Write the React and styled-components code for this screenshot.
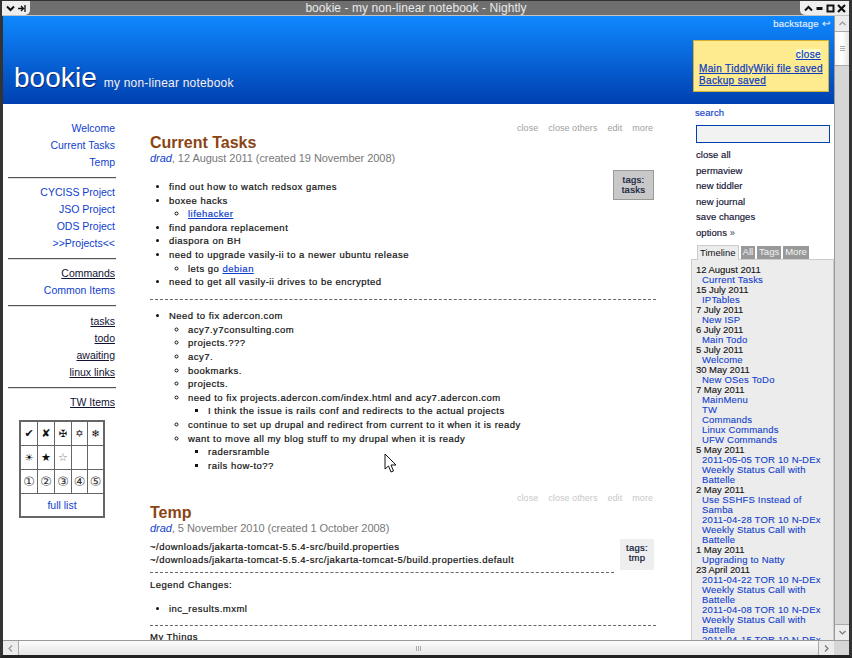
import React from 'react';
import styled, { createGlobalStyle } from 'styled-components';

const Global = createGlobalStyle`
  html, body { margin: 0; padding: 0; width: 852px; height: 658px; overflow: hidden; background: #000; }
  * { box-sizing: border-box; }
  body { font-family: "Liberation Sans", Arial, sans-serif; }
`;

const Frame = styled.div`
  position: relative;
  width: 852px; height: 658px;
  display: flex; flex-direction: column;
  background: #d8d8d8;
  border-left: 3px solid #333;
  border-right: 3px solid #333;
  border-bottom: 3px solid #222;
  border-top: 1px solid #333;
`;
const TitleBar = styled.div`
  height: 15px; flex: none;
  display: flex; align-items: stretch;
  background: #6f6f6f;
  border-bottom: 1px solid #c4c4c4;
  margin-left: -1px;
`;
const TitleTab = styled.div`
  flex: none;
  width: ${p => p.$w}px;
  background: #eeeeee;
  display: flex; align-items: center; justify-content: center; gap: 2px;
  border-radius: ${p => (p.$side === 'left' ? '0 0 5px 0' : '0 0 0 5px')};
`;
const TitleText = styled.div`
  flex: 1; text-align: center;
  color: #eaeaea; font-size: 12px; line-height: 14px; letter-spacing: 0.06px;
  padding-left: 2px;
`;
const Middle = styled.div`
  flex: 1; min-height: 0; display: flex;
`;
const Viewport = styled.div`
  width: 831px; flex: none; overflow: hidden; background: #fff;
`;
const Header = styled.header`
  height: 88px;
  background: linear-gradient(#0f88ff, #0040b0);
  position: relative;
  display: flex; flex-direction: column;
`;
const Backstage = styled.div`
  text-align: right; color: #e6f0ff; font-size: 9.5px; line-height: 12px;
  letter-spacing: 0.25px; padding: 2px 4px 0 0;
  height: 24px; -webkit-text-stroke: 0.15px #e6f0ff;
`;
const SiteTitle = styled.div`
  margin-top: auto; padding: 0 0 11px 11px;
  color: #fff; display: flex; align-items: baseline; gap: 7px;
`;
const SiteName = styled.span`
  font-size: 28px; line-height: 30px; letter-spacing: 0.05px;
  text-shadow: 1px 1px 0 #0a2a70;
`;
const SiteSub = styled.span`
  font-size: 12px; letter-spacing: 0.2px; color: #eef3ff;
  text-shadow: 1px 1px 0 #1a4aa0;
`;
const Message = styled.div`
  position: absolute; right: 5px; top: 24px;
  width: 136px; height: 52px;
  background: #ffeb8f; border: 1px solid #d8b030;
  padding: 8px 5px 0;
  font-size: 10px; line-height: 12.5px; letter-spacing: 0.36px;
  color: #0f3fc0;
`;
const MsgClose = styled.div`
  text-align: right; margin: 0 2px 1px 0;
`;
const MsgCloseText = styled.span`
  background: #fffbc4; text-decoration: underline; -webkit-text-stroke: 0.25px #0f3fc0;
`;
const MsgLine = styled.a`
  display: block; text-decoration: underline; white-space: nowrap;
  -webkit-text-stroke: 0.25px #0f3fc0;
`;
const Page = styled.div`
  display: flex; align-items: flex-start; height: 536px; overflow: hidden;
`;
const LeftMenu = styled.nav`
  width: 108px; margin-left: 5px; flex: none;
  padding-top: 16px;
  display: flex; flex-direction: column; align-items: stretch;
  font-size: 10.5px;
  text-align: right;
`;
const MenuLink = styled.a`
  display: block; line-height: 17px; height: 17px; padding-right: 1px;
  color: ${p => (p.$dark ? '#111133' : '#0f40cc')};
  span { text-decoration: ${p => (p.$dark ? 'underline' : 'none')}; }
`;
const MenuRule = styled.hr`
  margin: 6px 0 ${p => p.$after || 5}px; border: 0; border-top: 1px solid #555; border-bottom: 1px solid #ddd; height: 2px;
  width: 108px; align-self: flex-end;
`;
const SymbolTable = styled.div`
  margin: 9px 0 0 11px; width: 86px; text-align: center;
  display: grid; grid-template-columns: 16px 16px 16px 15px 15px;
  border: 2px solid #666;
  background: #666; gap: 1px;
`;
const Sym = styled.div`
  background: #fff; height: 23px; display: flex; align-items: center; justify-content: center;
  font-family: "DejaVu Sans", sans-serif; font-size: ${p => p.$fs || 10}px; color: ${p => p.$c || '#111'};
`;
const FullList = styled.div`
  grid-column: 1 / -1; background: #fff; height: 22px; line-height: 22px;
  font-size: 10.5px; color: #0f40cc;
`;
const Center = styled.main`
  width: 506px; margin-left: 34px; flex: none;
  padding-top: 18px;
`;
const Story = styled.article`
  margin-bottom: 19.5px;
`;
const Toolbar = styled.div`
  text-align: right; font-size: 9px; line-height: 12px; padding-right: 3px; height: 12px;
  letter-spacing: 0.05px; font-weight: 400;
  color: ${p => (p.$faint ? '#c8c8c8' : '#a0a0a0')};
  span { margin-left: 7.5px; }
`;
const StoryTitle = styled.h2`
  margin: 0; font-size: 16px; line-height: 16px; color: #8a4513; font-weight: 700; padding-top: 1px;
`;
const SubTitle = styled.div`
  font-size: 11px; line-height: 14px; color: #777; letter-spacing: -0.05px;
  em { color: #0f40cc; }
`;
const Tags = styled.div`
  float: right; margin: ${p => (p.$plain ? -1 : 5)}px 2px 0 0;
  width: ${p => p.$w}px; height: ${p => p.$h}px; padding: 4px 4px;
  text-align: center; font-size: 9.5px; line-height: 10px; letter-spacing: 0.3px;
  color: #0b1a50;
  background: ${p => (p.$plain ? '#eeeeee' : '#c8c8c8')};
  border: ${p => (p.$plain ? '0' : '1px solid #999')};
`;
const Body = styled.div`
  font-size: 9.5px; line-height: 13.6px; color: #111; letter-spacing: 0.48px;
  -webkit-text-stroke: 0.2px #111;
  position: relative;
  padding-top: ${p => p.$top || 0}px;
`;
const Spacer = styled.div`
  height: ${p => p.$h}px;
`;
const List = styled.ul`
  margin: 0; padding: 0 0 0 ${p => (p.$type === 'square' ? 20 : 19)}px;
  list-style-type: ${p => p.$type || 'disc'};
`;
const Dash = styled.hr`
  margin: ${p => p.$mt ?? 10}px 0 ${p => p.$mb ?? 9.5}px; border: 0; border-top: 1px dashed #666; height: 0; overflow: hidden;
  width: ${p => p.$w || 506}px;
`;
const Line = styled.div`
  white-space: nowrap;
`;
const BlueLink = styled.a`
  color: #0f40cc; text-decoration: underline; -webkit-text-stroke: 0.2px #0f40cc;
`;
const RightCol = styled.aside`
  width: 143px; margin-left: 35px; flex: none;
  padding-top: 3px;
`;
const SearchLabel = styled.div`
  margin-left: 4px; font-size: 9.5px; line-height: 12px; color: #0f40cc; letter-spacing: 0.1px;
  -webkit-text-stroke: 0.15px #0f40cc;
`;
const SearchBox = styled.div`
  margin: 6px 0 4px 5px; width: 134px; height: 18px;
  background: #f2f2f2; border: 1px solid #0040b0;
`;
const SideBtn = styled.div`
  margin-left: 5px; font-size: 9.5px; line-height: 15.5px; color: #111133; letter-spacing: 0.05px;
  -webkit-text-stroke: 0.15px #111133;
  span { color: #777; }
`;
const TabRow = styled.div`
  display: flex; gap: 2px; align-items: flex-end; margin: 5px 0 0 6px; height: 14px;
`;
const Tab = styled.div`
  font-size: 9.5px; line-height: 12px; padding: 0 2px;
  background: ${p => (p.$on ? '#ececec' : '#999')};
  color: ${p => (p.$on ? '#111' : '#f4f4f4')};
  height: ${p => (p.$on ? 15 : 13)}px;
  margin-bottom: ${p => (p.$on ? -1 : 0)}px;
  border: ${p => (p.$on ? '1px solid #ccc' : '0')};
  border-bottom: 0;
  position: relative;
  padding-top: ${p => (p.$on ? 1 : 0)}px;
`;
const Timeline = styled.div`
  width: 143px; background: #ececec; border: 1px solid #ccc; border-bottom: 0;
  padding: 5px 0 0 4px; height: 400px;
  font-size: 9.5px; line-height: 10px;
`;
const TDate = styled.div`
  color: #111; letter-spacing: -0.05px; -webkit-text-stroke: 0.1px #111;
`;
const TItem = styled.div`
  color: #0f40cc; padding-left: 6px; width: 131px; letter-spacing: 0.2px; -webkit-text-stroke: 0.1px #0f40cc;
`;
const VScroll = styled.div`
  width: 15px; flex: none; display: flex; flex-direction: column;
  background: #d6d6d6; border-left: 1px solid #999;
`;
const ScrollBtn = styled.div`
  height: 16px; flex: none; display: flex; align-items: center; justify-content: center;
  background: #ececec; border: 1px solid #aaa; border-width: ${p => p.$edge || '0 0 1px 0'};
`;
const VThumb = styled.div`
  height: 34px; flex: none; background: linear-gradient(90deg, #f8f8f8, #fff 50%, #e4e4e4);
  border-bottom: 1px solid #aaa; display: flex; align-items: center; justify-content: center;
`;
const Grow = styled.div` flex: 1; `;
const HScroll = styled.div`
  height: 15px; flex: none; display: flex; background: #d6d6d6;
  border-top: 1px solid #999;
`;
const HBtn = styled.div`
  width: 16px; flex: none; display: flex; align-items: center; justify-content: center;
  background: #ececec; border-right: ${p => (p.$right ? 0 : '1px solid #aaa')}; border-left: ${p => (p.$right ? '1px solid #aaa' : 0)};
`;
const HThumb = styled.div`
  flex: 1; background: linear-gradient(#fcfcfc, #e6e6e6); display: flex; align-items: center; justify-content: center;
`;
const Corner = styled.div` width: 15px; flex: none; background: #d6d6d6; `;
const Cursor = styled.svg`
  position: absolute; left: 381px; top: 452px; width: 13px; height: 21px;
`;

const Icon = ({ d, stroke = '#111', sw = 1.6 }) => (
  <svg width="9" height="9" viewBox="0 0 9 9"><path d={d} fill="none" stroke={stroke} strokeWidth={sw} /></svg>
);

const tl = [
  ['12 August 2011', ['Current Tasks']],
  ['15 July 2011', ['IPTables']],
  ['7 July 2011', ['New ISP']],
  ['6 July 2011', ['Main Todo']],
  ['5 July 2011', ['Welcome']],
  ['30 May 2011', ['New OSes ToDo']],
  ['7 May 2011', ['MainMenu', 'TW', 'Commands', 'Linux Commands', 'UFW Commands']],
  ['5 May 2011', ['2011-05-05 TOR 10 N-DEx Weekly Status Call with Battelle']],
  ['2 May 2011', ['Use SSHFS Instead of Samba', '2011-04-28 TOR 10 N-DEx Weekly Status Call with Battelle']],
  ['1 May 2011', ['Upgrading to Natty']],
  ['23 April 2011', [
    '2011-04-22 TOR 10 N-DEx Weekly Status Call with Battelle',
    '2011-04-08 TOR 10 N-DEx Weekly Status Call with Battelle',
    '2011-04-15 TOR 10 N-DEx Weekly Status Call with Battelle',
  ]],
];

const Menu1 = ['Welcome', 'Current Tasks', 'Temp'];
const Menu2 = ['CYCISS Project', 'JSO Project', 'ODS Project', '>>Projects<<'];
const Menu3 = [['Commands', true], ['Common Items', false]];
const Menu4 = ['tasks', 'todo', 'awaiting', 'linux links'];

const StoryTools = ({ faint }) => (
  <Toolbar $faint={faint}>
    <span>close</span> <span>close others</span> <span>edit</span> <span>more</span>
  </Toolbar>
);

export default function App() {
  return (
    <Frame>
      <Global />
      <TitleBar>
        <TitleTab $w={28} $side="left">
          <Icon d="M1 2.5 L4.5 6 L8 2.5" sw={2} />
          <Icon d="M1 4.5 H6 M4 2 L6.5 4.5 L4 7 M8 1 V8" sw={1.3} />
        </TitleTab>
        <TitleText>bookie - my non-linear notebook - Nightly</TitleText>
        <TitleTab $w={49} $side="right">
          <Icon d="M1 6.5 L4.5 3 L8 6.5" sw={2} />
          <Icon d="M1.5 4.5 H7.5" sw={3} />
          <Icon d="M1.5 1.5 H7.5 V7.5 H1.5 Z" sw={2} />
          <Icon d="M1 1 L8 8 M8 1 L1 8" sw={2.2} />
        </TitleTab>
      </TitleBar>
      <Middle>
        <Viewport>
          <Header>
            <Backstage>backstage ↩</Backstage>
            <Message>
              <MsgClose><MsgCloseText>close</MsgCloseText></MsgClose>
              <MsgLine>Main TiddlyWiki file saved</MsgLine>
              <MsgLine>Backup saved</MsgLine>
            </Message>
            <SiteTitle>
              <SiteName>bookie</SiteName>
              <SiteSub>my non-linear notebook</SiteSub>
            </SiteTitle>
          </Header>
          <Page>
            <LeftMenu>
              {Menu1.map(m => <MenuLink key={m}><span>{m}</span></MenuLink>)}
              <MenuRule />
              {Menu2.map(m => <MenuLink key={m}><span>{m}</span></MenuLink>)}
              <MenuRule />
              {Menu3.map(([m, d]) => <MenuLink key={m} $dark={d}><span>{m}</span></MenuLink>)}
              <MenuRule $after={6} />
              {Menu4.map(m => <MenuLink key={m} $dark><span>{m}</span></MenuLink>)}
              <MenuRule />
              <MenuLink $dark><span>TW Items</span></MenuLink>
              <SymbolTable>
                <Sym $fs={11}>✔</Sym><Sym $fs={11}>✘</Sym><Sym>✠</Sym><Sym>✡</Sym><Sym>❄</Sym>
                <Sym>☀</Sym><Sym $fs={11}>★</Sym><Sym $fs={11} $c="#888">☆</Sym><Sym /><Sym />
                <Sym $fs={13} $c="#333">①</Sym><Sym $fs={13} $c="#333">②</Sym><Sym $fs={13} $c="#333">③</Sym><Sym $fs={13} $c="#333">④</Sym><Sym $fs={13} $c="#333">⑤</Sym>
                <FullList>full list</FullList>
              </SymbolTable>
            </LeftMenu>
            <Center>
              <Story>
                <StoryTools />
                <StoryTitle>Current Tasks</StoryTitle>
                <SubTitle><em>drad</em>, 12 August 2011 (created 19 November 2008)</SubTitle>
                <Body>
                  <Tags $w={41} $h={30}>tags:<br />tasks</Tags>
                  <Spacer $h={15} />
                  <List>
                    <li>find out how to watch redsox games</li>
                    <li>boxee hacks
                      <List $type="circle"><li><BlueLink>lifehacker</BlueLink></li></List>
                    </li>
                    <li>find pandora replacement</li>
                    <li>diaspora on BH</li>
                    <li>need to upgrade vasily-ii to a newer ubuntu release
                      <List $type="circle"><li>lets go <BlueLink>debian</BlueLink></li></List>
                    </li>
                    <li>need to get all vasily-ii drives to be encrypted</li>
                  </List>
                  <Dash />
                  <List>
                    <li>Need to fix adercon.com
                      <List $type="circle">
                        <li>acy7.y7consulting.com</li>
                        <li>projects.???</li>
                        <li>acy7.</li>
                        <li>bookmarks.</li>
                        <li>projects.</li>
                        <li>need to fix projects.adercon.com/index.html and acy7.adercon.com
                          <List $type="square"><li>I think the issue is rails conf and redirects to the actual projects</li></List>
                        </li>
                        <li>continue to set up drupal and redirect from current to it when it is ready</li>
                        <li>want to move all my blog stuff to my drupal when it is ready
                          <List $type="square"><li>radersramble</li><li>rails how-to??</li></List>
                        </li>
                      </List>
                    </li>
                  </List>
                </Body>
              </Story>
              <Story>
                <StoryTools faint />
                <StoryTitle>Temp</StoryTitle>
                <SubTitle><em>drad</em>, 5 November 2010 (created 1 October 2008)</SubTitle>
                <Body $top={5}>
                  <Tags $plain $w={34} $h={31}>tags:<br />tmp</Tags>
                  <Line>~/downloads/jakarta-tomcat-5.5.4-src/build.properties</Line>
                  <Line>~/downloads/jakarta-tomcat-5.5.4-src/jakarta-tomcat-5/build.properties.default</Line>
                  <Dash $w={464} $mt={5} $mb={5} />
                  <Line>Legend Changes:</Line>
                  <Spacer $h={10} />
                  <List><li>inc_results.mxml</li></List>
                  <Dash $mb={4} />
                  <Line>My Things</Line>
                </Body>
              </Story>
            </Center>
            <RightCol>
              <SearchLabel>search</SearchLabel>
              <SearchBox />
              {['close all', 'permaview', 'new tiddler', 'new journal', 'save changes'].map(b => <SideBtn key={b}>{b}</SideBtn>)}
              <SideBtn>options <span>»</span></SideBtn>
              <TabRow>
                <Tab $on>Timeline</Tab><Tab>All</Tab><Tab>Tags</Tab><Tab>More</Tab>
              </TabRow>
              <Timeline>
                {tl.map(([d, items]) => (
                  <React.Fragment key={d}>
                    <TDate>{d}</TDate>
                    {items.map(i => <TItem key={i}>{i}</TItem>)}
                  </React.Fragment>
                ))}
              </Timeline>
            </RightCol>
          </Page>
        </Viewport>
        <VScroll>
          <ScrollBtn><Icon d="M1.5 6 L4.5 3 L7.5 6" stroke="#999" sw={1.2} /></ScrollBtn>
          <VThumb><Icon d="M2 2.5 H7 M2 4.5 H7 M2 6.5 H7" stroke="#999" sw={0.8} /></VThumb>
          <Grow />
          <ScrollBtn $edge="1px 0 0 0"><Icon d="M1.5 3 L4.5 6 L7.5 3" stroke="#777" sw={1.2} /></ScrollBtn>
        </VScroll>
      </Middle>
      <HScroll>
        <HBtn><Icon d="M6 1.5 L3 4.5 L6 7.5" stroke="#999" sw={1.2} /></HBtn>
        <HThumb><Icon d="M2.5 2 V7 M4.5 2 V7 M6.5 2 V7" stroke="#999" sw={0.8} /></HThumb>
        <HBtn $right><Icon d="M3 1.5 L6 4.5 L3 7.5" stroke="#777" sw={1.2} /></HBtn>
        <Corner />
      </HScroll>
      <Cursor viewBox="0 0 13 21">
        <path d="M1 1 L1 16 L4.5 13 L7 19 L9.5 18 L7 12 L12 12 Z" fill="#fff" stroke="#111" strokeWidth="1" />
      </Cursor>
    </Frame>
  );
}
